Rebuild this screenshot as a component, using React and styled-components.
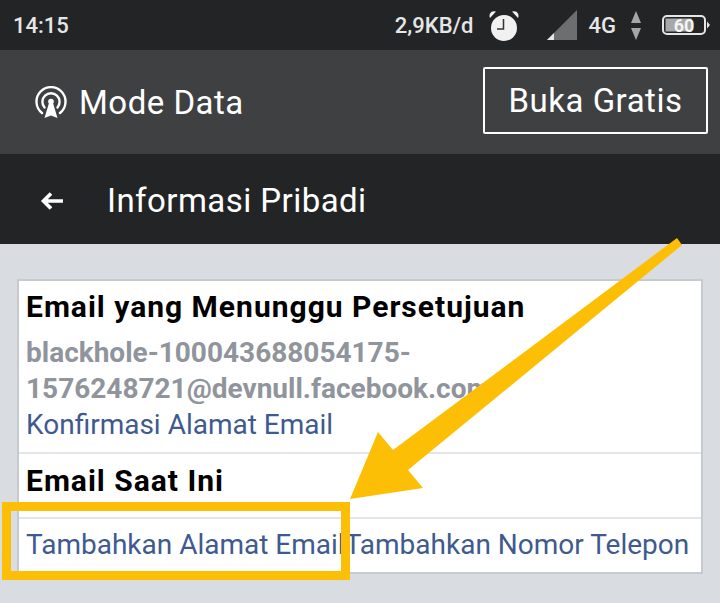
import React from "react";
import styled, { createGlobalStyle } from "styled-components";

const GlobalStyle = createGlobalStyle`
  html, body {
    margin: 0;
    padding: 0;
    background: #d9dce0;
  }
  body {
    font-family: Roboto, "Liberation Sans", sans-serif;
  }
`;

const Page = styled.div`
  position: relative;
  width: 720px;
  height: 603px;
  overflow: hidden;
  background: #d9dce0;
`;

const StatusBar = styled.div`
  display: flex;
  align-items: center;
  height: 50px;
  padding: 0 10px 0 13px;
  background: #232426;
  color: #e6e6e6;
  font-size: 22px;
  font-weight: 500;
`;

const StatusGroup = styled.div`
  display: flex;
  align-items: center;
  margin-left: auto;
`;

const StatusItem = styled.span`
  display: flex;
  margin-left: ${(p) => p.$gap || 0}px;
`;

const TopBar = styled.div`
  display: flex;
  align-items: center;
  justify-content: space-between;
  height: 104px;
  padding: 0 12px 0 35px;
  background: #3f4042;
  color: #fff;
`;

const ModeLabel = styled.div`
  display: flex;
  align-items: center;
  gap: 12px;
  font-size: 33px;
  letter-spacing: 0.5px;
`;

const OpenButton = styled.button`
  width: 225px;
  height: 67px;
  margin-bottom: 4px;
  padding: 0;
  background: transparent;
  border: 2px solid #fff;
  border-radius: 2px;
  color: #fff;
  font-family: inherit;
  font-size: 33px;
  letter-spacing: 0.5px;
`;

const TitleBar = styled.div`
  display: flex;
  align-items: center;
  gap: 43px;
  height: 90px;
  padding: 3px 0 0 40px;
  box-sizing: border-box;
  background: #232426;
  color: #fff;
  font-size: 33px;
  letter-spacing: 0.45px;
`;

const Card = styled.div`
  margin: 35px 17px 0;
  background: #fff;
  border: 2px solid #c6c9cd;
`;

const Section = styled.div`
  height: ${(p) => p.$height}px;
  padding: ${(p) => p.$top}px 7px 0;
  box-sizing: border-box;
  border-top: ${(p) => (p.$divided ? "2px solid #e4e5e8" : "none")};
`;

const Heading = styled.div`
  font-size: 30px;
  line-height: 34px;
  font-weight: 700;
  letter-spacing: 1px;
  color: #000;
`;

const Pending = styled.div`
  margin-top: 11px;
  font-size: 28px;
  line-height: 36px;
  font-weight: 700;
  color: #90949c;
`;

const LinkText = styled.a`
  display: block;
  font-size: 28px;
  line-height: 36px;
  color: #3e5a8f;
`;

const LinkRow = styled.div`
  display: flex;
  white-space: nowrap;
`;

const Highlight = styled.div`
  position: absolute;
  left: 2px;
  top: 502px;
  width: 348px;
  height: 78px;
  box-sizing: border-box;
  border: 9px solid #fdbf05;
`;

const ArrowLayer = styled.svg`
  position: absolute;
  left: 0;
  top: 0;
  pointer-events: none;
`;

const AlarmIcon = () => (
  <svg width="30" height="31" viewBox="0 0 30 31">
    <circle cx="15" cy="18" r="13" fill="#f1f1f1" />
    <path d="M1 8 L7 1.5 Q2.5 0.5 1 3.5 Q0 6 1 8 Z M29 8 L23 1.5 Q27.5 0.5 29 3.5 Q30 6 29 8 Z" fill="#f1f1f1" />
    <path d="M14.5 9 V19 H8" fill="none" stroke="#333" strokeWidth="1.5" />
  </svg>
);

const SignalIcon = () => (
  <svg width="30" height="30" viewBox="0 0 30 30">
    <path d="M0 30 L30 0 V30 Z" fill="#6d6e70" />
    <path d="M0 30 L7 23 V30 Z" fill="#e6e6e6" />
  </svg>
);

const UpDownIcon = () => (
  <svg width="10" height="29" viewBox="0 0 10 29">
    <path d="M5 0 L10 12 H0 Z" fill="#a5a6a8" />
    <path d="M0 17 H10 L5 29 Z" fill="#a5a6a8" />
  </svg>
);

const BatteryIcon = () => (
  <svg width="48" height="20" viewBox="0 0 48 20">
    <rect x="1" y="1" width="42" height="18" rx="4" fill="none" stroke="#e6e6e6" strokeWidth="2" />
    <rect x="3.5" y="3.5" width="26" height="13" fill="#a8a8a8" />
    <path d="M45 6.5 L48 10 L45 13.5 Z" fill="#e6e6e6" />
    <text x="22" y="16.5" textAnchor="middle" fontSize="18" fontWeight="700" fill="#f4f4f4" fontFamily="Roboto, sans-serif">60</text>
  </svg>
);

const BroadcastIcon = () => (
  <svg width="32" height="32" viewBox="0 0 32 32">
    <path d="M7 27 A14.5 14.5 0 1 1 25 27" fill="none" stroke="#fff" strokeWidth="2.4" strokeLinecap="round" />
    <path d="M9.5 21.5 A8.6 8.6 0 1 1 22.5 21.5" fill="none" stroke="#fff" strokeWidth="2.4" strokeLinecap="round" />
    <circle cx="16" cy="15.5" r="2.8" fill="#fff" />
    <path d="M14 17 H18 L22.5 32 L16 29.5 L9.5 32 Z" fill="#fff" />
  </svg>
);

const BackIcon = () => (
  <svg width="24" height="20" viewBox="0 0 24 20">
    <path d="M23 10 H4 M11 2.5 L3.5 10 L11 17.5" fill="none" stroke="#fff" strokeWidth="3.6" />
  </svg>
);

export default function App() {
  return (
    <Page>
      <GlobalStyle />
      <StatusBar>
        <span>14:15</span>
        <StatusGroup>
          <span>2,9KB/d</span>
          <StatusItem $gap={15}><AlarmIcon /></StatusItem>
          <StatusItem $gap={28}><SignalIcon /></StatusItem>
          <StatusItem $gap={12}>4G</StatusItem>
          <StatusItem $gap={15}><UpDownIcon /></StatusItem>
          <StatusItem $gap={21}><BatteryIcon /></StatusItem>
        </StatusGroup>
      </StatusBar>
      <TopBar>
        <ModeLabel>
          <BroadcastIcon />
          Mode Data
        </ModeLabel>
        <OpenButton>Buka Gratis</OpenButton>
      </TopBar>
      <TitleBar>
        <BackIcon />
        Informasi Pribadi
      </TitleBar>
      <Card>
        <Section $height={171} $top={9}>
          <Heading>Email yang Menunggu Persetujuan</Heading>
          <Pending>
            blackhole-100043688054175-
            <br />
            1576248721@devnull.facebook.com
          </Pending>
          <LinkText>Konfirmasi Alamat Email</LinkText>
        </Section>
        <Section $divided $height={65} $top={10}>
          <Heading>Email Saat Ini</Heading>
        </Section>
        <Section $divided $height={55} $top={8}>
          <LinkRow>
            <LinkText>Tambahkan Alamat Email</LinkText>
            <LinkText>Tambahkan Nomor Telepon</LinkText>
          </LinkRow>
        </Section>
      </Card>
      <ArrowLayer width="720" height="603" viewBox="0 0 720 603">
        <path d="M677 238 L682 245 L408 470 L423 488 L350 499 L378 432 L393 450 Z" fill="#fdbf05" />
      </ArrowLayer>
      <Highlight />
    </Page>
  );
}
